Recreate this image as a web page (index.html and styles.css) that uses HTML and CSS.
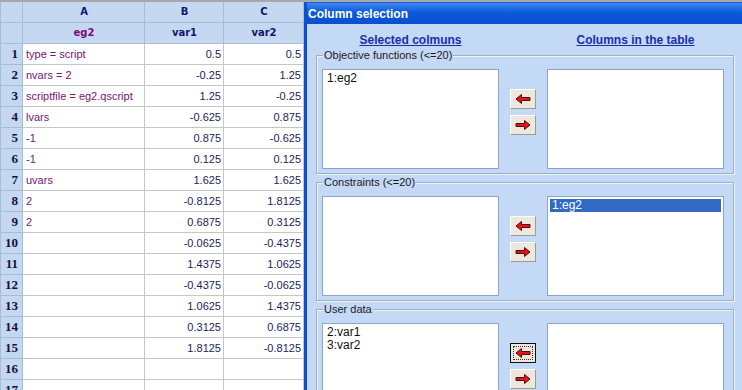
FILE: index.html
```html
<!DOCTYPE html>
<html>
<head>
    <title>Column selection</title>
    <link rel="stylesheet" href="styles.css">
</head>
<body>
    <div class="topline"></div>
    <div class="screen">
        <table class="sheet">
            <colgroup>
                <col class="c-num"><col class="c-a"><col class="c-b"><col class="c-c">
            </colgroup>
            <tr class="letters"><th></th><th>A</th><th>B</th><th>C</th></tr>
            <tr class="names"><th></th><th class="purple">eg2</th><th>var1</th><th>var2</th></tr>
            <tr><th>1</th><td class="txt">type = script</td><td>0.5</td><td>0.5</td></tr>
            <tr><th>2</th><td class="txt">nvars = 2</td><td>-0.25</td><td>1.25</td></tr>
            <tr><th>3</th><td class="txt">scriptfile = eg2.qscript</td><td>1.25</td><td>-0.25</td></tr>
            <tr><th>4</th><td class="txt">lvars</td><td>-0.625</td><td>0.875</td></tr>
            <tr><th>5</th><td class="txt">-1</td><td>0.875</td><td>-0.625</td></tr>
            <tr><th>6</th><td class="txt">-1</td><td>0.125</td><td>0.125</td></tr>
            <tr><th>7</th><td class="txt">uvars</td><td>1.625</td><td>1.625</td></tr>
            <tr><th>8</th><td class="txt">2</td><td>-0.8125</td><td>1.8125</td></tr>
            <tr><th>9</th><td class="txt">2</td><td>0.6875</td><td>0.3125</td></tr>
            <tr><th>10</th><td class="txt"></td><td>-0.0625</td><td>-0.4375</td></tr>
            <tr><th>11</th><td class="txt"></td><td>1.4375</td><td>1.0625</td></tr>
            <tr><th>12</th><td class="txt"></td><td>-0.4375</td><td>-0.0625</td></tr>
            <tr><th>13</th><td class="txt"></td><td>1.0625</td><td>1.4375</td></tr>
            <tr><th>14</th><td class="txt"></td><td>0.3125</td><td>0.6875</td></tr>
            <tr><th>15</th><td class="txt"></td><td>1.8125</td><td>-0.8125</td></tr>
            <tr><th>16</th><td class="txt"></td><td></td><td></td></tr>
            <tr><th>17</th><td class="txt"></td><td></td><td></td></tr>
        </table>

        <div class="dialog">
            <div class="titlebar">Column selection</div>
            <div class="dialog-body">
                <div class="col-heads">
                    <span class="head">Selected colmuns</span>
                    <span></span>
                    <span class="head">Columns in the table</span>
                </div>

                <div class="group">
                    <span class="group-label">Objective functions (&lt;=20)</span>
                    <div class="listbox"><div class="item">1:eg2</div></div>
                    <div class="movers">
                        <button class="mover"><svg width="16" height="10" viewBox="0 0 16 10"><polygon points="1,5 6.5,0.5 6.5,3.5 15,3.5 15,6.5 6.5,6.5 6.5,9.5" fill="#e4121b" stroke="#5a0a0a" stroke-width="1"/></svg></button>
                        <button class="mover"><svg width="16" height="10" viewBox="0 0 16 10"><polygon points="15,5 9.5,0.5 9.5,3.5 1,3.5 1,6.5 9.5,6.5 9.5,9.5" fill="#e4121b" stroke="#5a0a0a" stroke-width="1"/></svg></button>
                    </div>
                    <div class="listbox"></div>
                </div>

                <div class="group">
                    <span class="group-label">Constraints (&lt;=20)</span>
                    <div class="listbox"></div>
                    <div class="movers">
                        <button class="mover"><svg width="16" height="10" viewBox="0 0 16 10"><polygon points="1,5 6.5,0.5 6.5,3.5 15,3.5 15,6.5 6.5,6.5 6.5,9.5" fill="#e4121b" stroke="#5a0a0a" stroke-width="1"/></svg></button>
                        <button class="mover"><svg width="16" height="10" viewBox="0 0 16 10"><polygon points="15,5 9.5,0.5 9.5,3.5 1,3.5 1,6.5 9.5,6.5 9.5,9.5" fill="#e4121b" stroke="#5a0a0a" stroke-width="1"/></svg></button>
                    </div>
                    <div class="listbox"><div class="item selected">1:eg2</div></div>
                </div>

                <div class="group">
                    <span class="group-label">User data</span>
                    <div class="listbox"><div class="item">2:var1</div><div class="item">3:var2</div></div>
                    <div class="movers">
                        <button class="mover focused"><svg width="16" height="10" viewBox="0 0 16 10"><polygon points="1,5 6.5,0.5 6.5,3.5 15,3.5 15,6.5 6.5,6.5 6.5,9.5" fill="#e4121b" stroke="#5a0a0a" stroke-width="1"/></svg></button>
                        <button class="mover"><svg width="16" height="10" viewBox="0 0 16 10"><polygon points="15,5 9.5,0.5 9.5,3.5 1,3.5 1,6.5 9.5,6.5 9.5,9.5" fill="#e4121b" stroke="#5a0a0a" stroke-width="1"/></svg></button>
                    </div>
                    <div class="listbox"></div>
                </div>
            </div>
        </div>
    </div>
</body>
</html>
```

FILE: styles.css
```css
html, body {
    margin: 0;
    height: 390px;
    overflow: hidden;
}
body {
    font-family: "Liberation Sans", Arial, sans-serif;
    font-size: 11px;
    background: #ffffff;
}
.topline {
    height: 2px;
    background: #a8a8a8;
}
.screen {
    display: flex;
    align-items: flex-start;
}

/* spreadsheet */
.sheet {
    border-collapse: collapse;
    table-layout: fixed;
    width: 303px;
    flex: none;
}
.c-num { width: 22px; }
.c-a { width: 122px; }
.c-b { width: 79px; }
.c-c { width: 80px; }
.sheet td, .sheet th {
    height: 21px;
    padding: 0 2px 0 3px;
    border: 1px solid #c6c6c6;
    white-space: nowrap;
    overflow: hidden;
    box-sizing: border-box;
}
.sheet th {
    background: #c5d8f1;
    border-color: #a9bcd6;
    color: #14146a;
}
.sheet tr > th:first-child {
    font-family: "Liberation Serif", "Times New Roman", serif;
    font-size: 13px;
    text-align: right;
    padding-right: 4px;
    color: #12123a;
}
.sheet tr.letters th, .sheet tr.names th {
    font-family: "DejaVu Sans", Verdana, sans-serif;
    font-size: 10px;
    text-align: center;
}
.sheet tr.letters th { height: 20px; border-top: none; }
.sheet tr.names th { height: 21px; }
.sheet th.purple { color: #7d0a7d; }
.sheet td {
    text-align: right;
    color: #1c1c5c;
    font-size: 11px;
}
.sheet td.txt {
    text-align: left;
    color: #7a1470;
}

/* dialog */
.dialog {
    flex: 1;
    border-left: 3px solid #0c4fd3;
    border-top: 1px solid #1f5fdc;
    height: 400px;
    background: #c4d9f6;
    overflow: hidden;
}
.titlebar {
    height: 21px;
    line-height: 23px;
    padding-left: 1px;
    color: #ffffff;
    font-size: 12px;
    font-weight: bold;
    background: linear-gradient(to bottom, #3f86ee, #0b59dc 45%, #0a4fd0);
}
.dialog-body {
    padding-left: 9px;
}
.col-heads {
    display: grid;
    grid-template-columns: 177px 48px 177px;
    height: 31px;
    align-items: center;
    padding-left: 6px;
}
.head {
    text-align: center;
    font-size: 12px;
    font-weight: bold;
    color: #1b2fa6;
    text-decoration: underline;
}

.group {
    position: relative;
    display: flex;
    width: 418px;
    box-sizing: border-box;
    padding: 13px 9px 4px 5px;
    margin-bottom: 8px;
    border: 1px solid #9cadc4;
    box-shadow: inset 1px 1px 0 #eef4fd, 1px 1px 0 #eef4fd;
}
.group-label {
    position: absolute;
    left: 6px;
    top: -7px;
    padding: 0 1px;
    line-height: 13px;
    font-size: 11px;
    color: #1a1a1a;
    background: #c4d9f6;
}
.listbox {
    width: 177px;
    height: 100px;
    box-sizing: border-box;
    padding: 1px 2px;
    background: #ffffff;
    border: 1px solid #8ea4c4;
    font-size: 12px;
    color: #111;
}
.item {
    line-height: 13px;
    padding: 0 2px;
}
.item.selected {
    background: #316ac5;
    color: #ffffff;
}
.listbox .item:first-child { margin-top: 1px; }
.movers {
    width: 48px;
    display: flex;
    flex-direction: column;
    align-items: center;
    gap: 6px;
    padding-top: 20px;
}
.mover {
    width: 26px;
    height: 20px;
    padding: 0;
    display: flex;
    align-items: center;
    justify-content: center;
    background: #ece8de;
    border: 1px solid;
    border-color: #ffffff #9d9a90 #9d9a90 #ffffff;
}
.mover.focused {
    border: 1px solid #111111;
    outline: 1px dotted #333333;
    outline-offset: -4px;
}
```
